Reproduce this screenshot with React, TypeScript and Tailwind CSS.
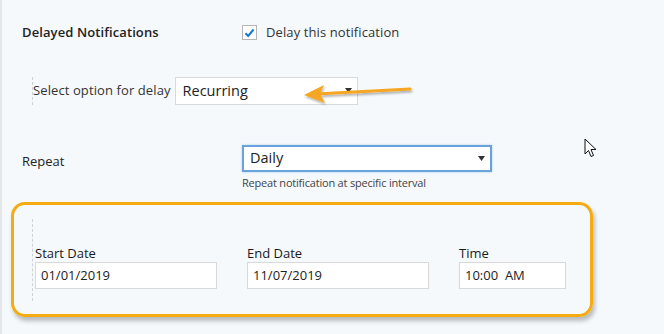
import React from "react";

const font = { fontFamily: '"Open Sans", "Noto Sans", sans-serif' };

function Caret() {
  return (
    <svg width="7" height="5" viewBox="0 0 7 5" className="shrink-0">
      <path d="M0 0 H7 L3.5 5 Z" fill="#333" />
    </svg>
  );
}

function DateField({ label, value, width }: { label: string; value: string; width: string }) {
  return (
    <div className="flex flex-col">
      <span className="text-[13px] leading-[18px] font-medium text-[#1a1a1a]">{label}</span>
      <div
        className={`${width} h-[27px] bg-white border border-[#d9d9d9] flex items-center px-[5px] text-[13px] text-[#222] whitespace-pre`}
      >
        {value}
      </div>
    </div>
  );
}

export default function App() {
  return (
    <div
      className="relative w-[664px] h-[334px] overflow-hidden bg-[#f5f9fc] border-l-2 border-[#e4e6e8] text-[#2b2b2b]"
      style={font}
    >
      {/* delayed notifications */}
      <div className="flex items-center pt-[23px] pl-[20px]">
        <span className="w-[220px] text-[13px] font-semibold tracking-[0.1px] text-[#222]">
          Delayed Notifications
        </span>
        <span className="w-[15px] h-[15px] bg-white border border-[#b5b5b5] flex items-center justify-center">
          <svg width="11" height="10" viewBox="0 0 11 10">
            <path d="M1.5 5.2 L4.2 8 L9.6 1.5" fill="none" stroke="#1e78c8" strokeWidth="2" />
          </svg>
        </span>
        <span className="ml-[9px] text-[13px] tracking-[0.1px] text-[#333]">Delay this notification</span>
      </div>

      {/* select option */}
      <div className="flex items-center mt-[34px] ml-[30px] border-l border-dashed border-[#cfd3d6] h-[28px]">
        <span className="text-[13px] tracking-[0.1px] text-[#333]">Select option for delay</span>
        <div className="ml-[4px] w-[183px] h-[28px] bg-white border border-[#dadada] flex items-center justify-between pl-[7px] pr-[5px]">
          <span className="text-[14.5px] text-[#222]">Recurring</span>
          <Caret />
        </div>
      </div>

      {/* repeat */}
      <div className="flex mt-[40px] pl-[20px]">
        <span className="w-[220px] pt-[7px] text-[13px] text-[#222]">Repeat</span>
        <div className="flex flex-col">
          <div className="w-[250px] h-[27px] bg-white border-2 border-[#6aa3db] shadow-[0_0_2px_#a9cdf0] flex items-center justify-between pl-[6px] pr-[5px]">
            <span className="text-[14.5px] text-[#222]">Daily</span>
            <Caret />
          </div>
          <span className="mt-[3px] text-[11px] tracking-[-0.2px] text-[#444]">
            Repeat notification at specific interval
          </span>
        </div>
      </div>

      {/* date range */}
      <div className="mt-[11px] ml-[9px] w-[582px] h-[115px] border-[3px] border-[#f6ab12] rounded-[14px] shadow-[2px_4px_4px_rgba(0,0,0,0.25)] pl-[18px] pt-[14px]">
        <div className="h-[82px] border-l border-dashed border-[#cfd3d6] pl-[2px] pt-[25px] flex">
          <DateField label="Start Date" value="01/01/2019" width="w-[182px]" />
          <div className="ml-[30px]">
            <DateField label="End Date" value="11/07/2019" width="w-[182px]" />
          </div>
          <div className="ml-[30px]">
            <DateField label="Time" value="10:00  AM" width="w-[107px]" />
          </div>
        </div>
      </div>

      {/* orange arrow annotation */}
      <svg className="absolute left-[298px] top-[80px]" width="120" height="30" viewBox="0 0 120 30">
        <defs>
          <filter id="sh" x="-20%" y="-50%" width="140%" height="200%">
            <feDropShadow dx="1" dy="2" stdDeviation="1.2" floodColor="#000" floodOpacity="0.3" />
          </filter>
        </defs>
        <g filter="url(#sh)">
          <path d="M110 9 L16 14" stroke="#f5a623" strokeWidth="3" strokeLinecap="round" fill="none" />
          <path d="M4 15 L24 5 L20 14 L25 23 Z" fill="#f5a623" />
        </g>
      </svg>

      {/* mouse cursor */}
      <svg className="absolute left-[582px] top-[138px]" width="14" height="21" viewBox="0 0 14 21">
        <path
          d="M1 1 L1 16 L4.5 12.5 L7 18.5 L9.5 17.5 L7 11.5 L12 11.5 Z"
          fill="#fff"
          stroke="#111"
          strokeWidth="1"
          strokeLinejoin="round"
        />
      </svg>
    </div>
  );
}
